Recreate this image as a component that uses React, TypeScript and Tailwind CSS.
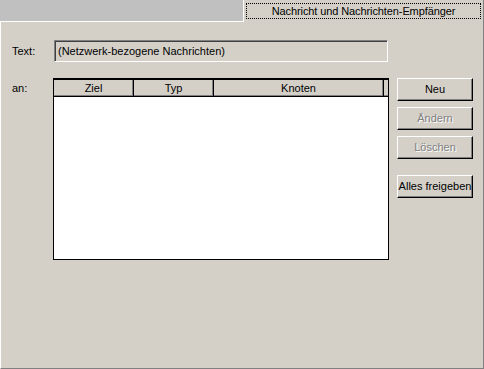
import React from "react";

const Btn = ({ label, disabled }: { label: string; disabled?: boolean }) => (
  <div className="w-[76px] h-[23px] bg-[#d4d0c8] border border-t-white border-l-white border-r-black border-b-black shadow-[inset_-1px_-1px_0_#808080] flex items-center justify-center">
    <span className={disabled ? "text-[#808080] [text-shadow:1px_1px_0_#ffffff]" : "text-black"}>{label}</span>
  </div>
);

const Head = ({ label, w }: { label: string; w: string }) => (
  <div className={`${w} h-full border-r border-b border-black shadow-[inset_-1px_-1px_0_#808080] flex items-center justify-center bg-[#d4d0c8]`}>
    {label}
  </div>
);

export default function App() {
  return (
    <div className="w-[484px] h-[369px] bg-[#c0c0c0] flex flex-col font-['Liberation_Sans',Arial,sans-serif] text-[11px] text-black leading-none">
      <div className="flex h-[22px] shrink-0">
        <div className="flex-1 border-b border-white" />
        <div className="w-[241px] bg-[#d4d0c8] border-l border-white border-r border-r-[#808080] pt-[3px] px-[2px]">
          <div className="h-[16px] border border-dotted border-black flex items-center justify-center tracking-[-0.1px]">
            Nachricht und Nachrichten-Empfänger
          </div>
        </div>
      </div>
      <div className="flex-1 bg-[#d4d0c8] border-l border-white border-r border-r-[#808080] border-b border-b-[#808080] pl-[11px] pt-[18px]">
        <div className="flex items-center h-[22px]">
          <div className="w-[42px]">Text:</div>
          <div className="w-[334px] h-[22px] border border-t-[#808080] border-l-[#808080] border-r-white border-b-white shadow-[inset_1px_1px_0_#404040] flex items-center pl-[3px]">
            (Netzwerk-bezogene Nachrichten)
          </div>
        </div>
        <div className="flex mt-[16px]">
          <div className="w-[41px] pt-[5px]">an:</div>
          <div className="w-[336px] h-[182px] bg-white border border-t-2 border-black">
            <div className="flex h-[17px]">
              <Head label="Ziel" w="w-[80px]" />
              <Head label="Typ" w="w-[80px]" />
              <Head label="Knoten" w="w-[170px]" />
              <div className="flex-1 h-full border-b border-black shadow-[inset_0_-1px_0_#808080] bg-[#d4d0c8]" />
            </div>
          </div>
          <div className="ml-[8px] flex flex-col">
            <Btn label="Neu" />
            <div className="mt-[6px]"><Btn label="Ändern" disabled /></div>
            <div className="mt-[6px]"><Btn label="Löschen" disabled /></div>
            <div className="mt-[16px]"><Btn label="Alles freigeben" /></div>
          </div>
        </div>
      </div>
    </div>
  );
}
